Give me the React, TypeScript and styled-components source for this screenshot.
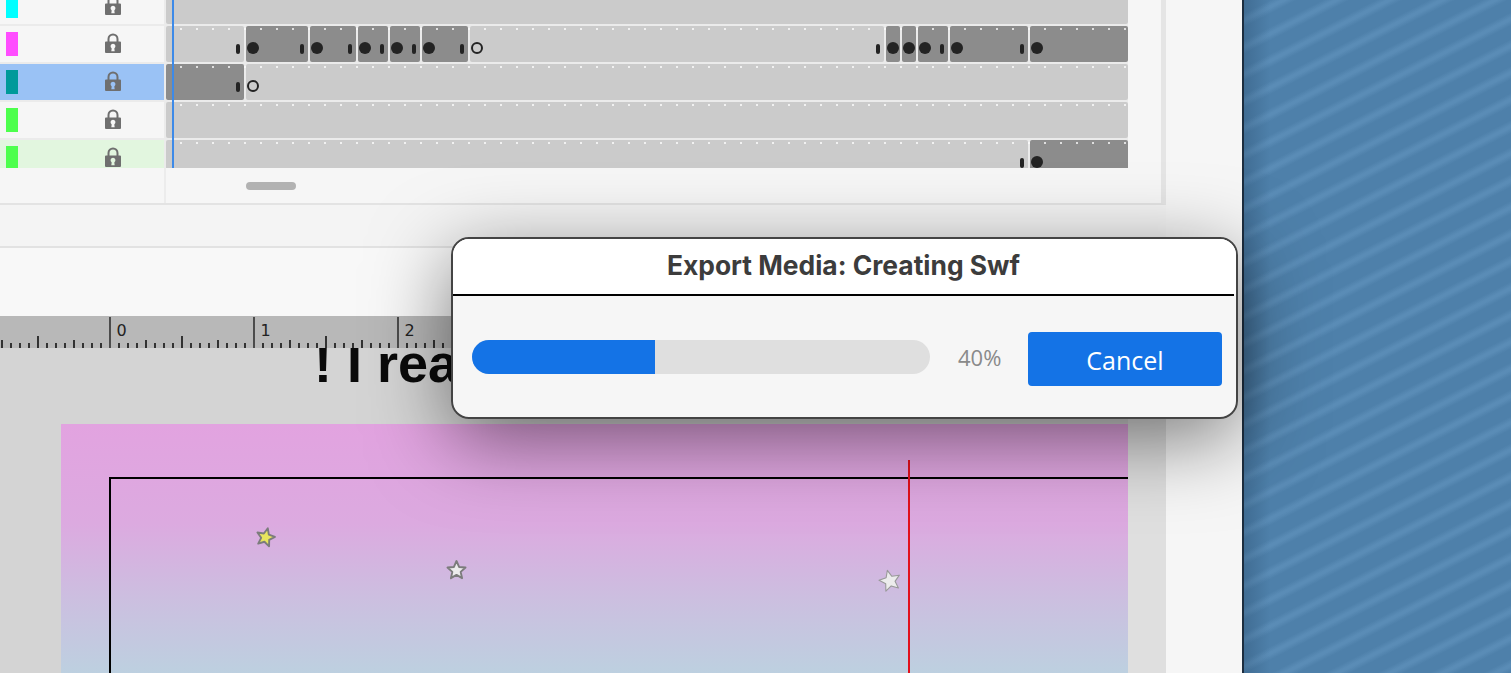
import React from 'react'
import styled, { createGlobalStyle } from 'styled-components'

const GlobalStyle = createGlobalStyle`
  html, body {
    margin: 0;
    padding: 0;
    background: #f6f6f6;
    overflow: hidden;
  }
  * {
    box-sizing: border-box;
  }
`

const Screen = styled.div`
  position: relative;
  display: flex;
  width: 1511px;
  height: 673px;
  overflow: hidden;
  font-family: "Open Sans", "Liberation Sans", sans-serif;
`

const AppWindow = styled.div`
  display: flex;
  flex: 0 0 1244px;
  background: #f6f6f6;
  border-right: 2px solid #1d2e40;
`

const MainColumn = styled.div`
  display: flex;
  flex-direction: column;
  flex: 0 0 1166px;
`

const Desktop = styled.div`
  flex: 1;
  background:
    linear-gradient(90deg, rgba(30, 60, 90, 0.28) 0, rgba(30, 60, 90, 0) 26px),
    repeating-linear-gradient(
      153deg,
      #4e80aa 0 12px,
      #5a8cb6 17px 19px,
      #4e80aa 24px
    );
`

const TimelinePanel = styled.section`
  position: relative;
  flex: 0 0 205px;
  background: #f6f6f6;
  border-right: 5px solid #e5e5e5;
  border-bottom: 2px solid #e3e3e3;
`

const RowsViewport = styled.div`
  height: 168px;
  width: 1128px;
  overflow: hidden;
  background: #ebebeb;
`

const RowList = styled.div`
  display: flex;
  flex-direction: column;
  gap: 2px;
  margin-top: -12px;
`

const Row = styled.div`
  display: flex;
  gap: 2px;
  height: 36px;
`

const LayerCell = styled.div<{ $tint: string }>`
  display: flex;
  flex: 0 0 164px;
  padding: 6px 0 0 6px;
  background: ${(p) => p.$tint};
`

const ColorChip = styled.div<{ $color: string }>`
  width: 12px;
  height: 24px;
  background: ${(p) => p.$color};
`

const LockIcon = styled.svg`
  width: 16px;
  height: 20px;
  margin: 1px 0 0 87px;
  color: #6f6f6f;
`

const Track = styled.div`
  position: relative;
  display: flex;
  flex: 0 0 962px;
  gap: 2px;

  &::after {
    content: '';
    position: absolute;
    inset: 0;
    background-image: linear-gradient(90deg, rgba(255, 255, 255, 0.72) 2px, transparent 2px);
    background-size: 16px 2px;
    background-position: 14px 2px;
    background-repeat: repeat-x;
    pointer-events: none;
  }
`

const FrameSpan = styled.div<{ $width: number; $filled?: boolean }>`
  display: flex;
  align-items: flex-start;
  justify-content: space-between;
  flex: 0 0 ${(p) => p.$width}px;
  min-width: 0;
  padding: 16px 4px 0 1px;
  background: ${(p) => (p.$filled ? '#8c8c8c' : '#cbcbcb')};
  border-radius: 2px;
`

const Keyframe = styled.span<{ $hollow?: boolean }>`
  flex: 0 0 12px;
  height: 12px;
  border-radius: 50%;
  background: ${(p) => (p.$hollow ? 'transparent' : '#232323')};
  border: ${(p) => (p.$hollow ? '2px solid #232323' : 'none')};
`

const EndBar = styled.span`
  flex: 0 0 4px;
  height: 10px;
  margin: 2px 0 0 auto;
  border-radius: 2px;
  background: #232323;
`

const Playhead = styled.div`
  position: absolute;
  left: 172px;
  top: 0;
  width: 2px;
  height: 168px;
  background: #3d8ae8;
`

const ScrollRow = styled.div`
  display: flex;
  width: 1128px;
  height: 35px;
`

const ScrollLabelCell = styled.div`
  flex: 0 0 166px;
  border-right: 2px solid #ececec;
`

const ScrollThumb = styled.div`
  width: 50px;
  height: 8px;
  margin: 14px 0 0 80px;
  border-radius: 4px;
  background: #b2b2b2;
`

const StageToolbar = styled.div`
  flex: 0 0 43px;
  background: #f4f4f4;
  border-bottom: 2px solid #e2e2e2;
`

const StageHeader = styled.div`
  flex: 0 0 68px;
  background: #f8f8f8;
`

const RulerStrip = styled.div`
  position: relative;
  z-index: 1;
  flex: 0 0 32px;
  background: #b8b8b8;
`

const RulerSvg = styled.svg`
  display: block;
  width: 1166px;
  height: 32px;
`

const RulerLabel = styled.text`
  font-family: "DejaVu Sans", sans-serif;
  font-size: 16px;
  fill: #222;
`

const StageCanvas = styled.div`
  position: relative;
  display: flex;
  flex: 1;
  background: #d4d4d4;
  overflow: hidden;
`

const Pasteboard = styled.div`
  flex: 0 0 1128px;
  padding: 76px 0 0 61px;
`

const StageGutter = styled.div`
  flex: 0 0 38px;
  background: #dfdfdf;
`

const Artboard = styled.div`
  position: relative;
  width: 1067px;
  height: 249px;
  padding: 53px 0 0 48px;
  background: linear-gradient(180deg, #e2a3e0 0%, #dcaae0 40%, #cbc0e0 72%, #bdd0e0 100%);
`

const BoundsFrame = styled.div`
  height: 100%;
  border-top: 2px solid #000;
  border-left: 2px solid #000;
`

const GuideLine = styled.div`
  position: absolute;
  left: 847px;
  top: 36px;
  bottom: 0;
  width: 2px;
  background: #e2101c;
`

const StarShape = styled.svg<{ $x: number; $y: number; $size: number; $rotate: number }>`
  position: absolute;
  left: ${(p) => p.$x - p.$size / 2}px;
  top: ${(p) => p.$y - p.$size / 2}px;
  width: ${(p) => p.$size}px;
  height: ${(p) => p.$size}px;
  transform: rotate(${(p) => p.$rotate}deg);
  overflow: visible;
`

const CanvasText = styled.div`
  position: absolute;
  left: 314px;
  top: -12px;
  font-family: "Liberation Sans", Arial, sans-serif;
  font-size: 54px;
  font-weight: 700;
  line-height: 54px;
  color: #0a0a0a;
  white-space: pre;
`

const Dialog = styled.div`
  position: absolute;
  z-index: 2;
  left: 451px;
  top: 237px;
  width: 787px;
  height: 182px;
  display: flex;
  flex-direction: column;
  border: 2px solid #444;
  border-radius: 18px;
  background: #f6f6f6;
  overflow: hidden;
`

const DialogShadow = styled.div`
  position: absolute;
  z-index: 2;
  left: 451px;
  top: 237px;
  width: 787px;
  height: 182px;
  border-radius: 18px;
  box-shadow: 0 20px 80px rgba(0, 0, 0, 0.5);
`

const DialogHeader = styled.header`
  display: flex;
  align-items: center;
  justify-content: center;
  flex: 0 0 55px;
  padding: 0 2px 3px 0;
  background: #fff;
  font-family: Inter, "Liberation Sans", sans-serif;
  font-size: 26.4px;
  font-weight: 700;
  color: #3c3c3c;
`

const DialogRule = styled.div`
  flex: 0 0 2px;
  margin-right: 2px;
  background: #000;
`

const DialogBody = styled.div`
  display: flex;
  align-items: flex-start;
  padding: 36px 14px 0 19px;
`

const ProgressTrack = styled.div`
  flex: 0 0 458px;
  height: 34px;
  margin-top: 8px;
  border-radius: 17px;
  background: #dfdfdf;
  overflow: hidden;
`

const ProgressFill = styled.div`
  height: 100%;
  background: #1473e6;
`

const Percent = styled.span`
  flex: 0 0 98px;
  padding: 9px 0 0 28px;
  font-size: 22px;
  line-height: 32px;
  color: #8a8a8a;
`

const CancelButton = styled.button`
  flex: 0 0 194px;
  height: 54px;
  padding: 2px 0 0;
  border: none;
  border-radius: 4px;
  background: #1473e6;
  color: #fff;
  font-family: "Open Sans", "Liberation Sans", sans-serif;
  font-size: 25px;
`

type Span = { w: number; filled?: boolean; key?: 'dot' | 'hollow'; end?: boolean }

const rows: { chip: string; tint: string; spans: Span[] }[] = [
  { chip: '#00ffff', tint: '#f6f6f6', spans: [{ w: 962 }] },
  {
    chip: '#ff4dff',
    tint: '#f6f6f6',
    spans: [
      { w: 78, end: true },
      { w: 62, filled: true, key: 'dot', end: true },
      { w: 46, filled: true, key: 'dot', end: true },
      { w: 30, filled: true, key: 'dot', end: true },
      { w: 30, filled: true, key: 'dot', end: true },
      { w: 46, filled: true, key: 'dot', end: true },
      { w: 414, key: 'hollow', end: true },
      { w: 14, filled: true, key: 'dot' },
      { w: 14, filled: true, key: 'dot' },
      { w: 30, filled: true, key: 'dot', end: true },
      { w: 78, filled: true, key: 'dot', end: true },
      { w: 98, filled: true, key: 'dot' },
    ],
  },
  {
    chip: '#009a9a',
    tint: '#9ac2f5',
    spans: [
      { w: 78, filled: true, end: true },
      { w: 882, key: 'hollow' },
    ],
  },
  { chip: '#4dff4d', tint: '#f6f6f6', spans: [{ w: 962 }] },
  {
    chip: '#4dff4d',
    tint: '#e2f6df',
    spans: [
      { w: 862, end: true },
      { w: 98, filled: true, key: 'dot' },
    ],
  },
]

const Lock = () => (
  <LockIcon viewBox="0 0 16 20">
    <path d="M3.5 9V6a4.5 4.5 0 0 1 9 0v3" fill="none" stroke="currentColor" strokeWidth="2" />
    <path
      fillRule="evenodd"
      fill="currentColor"
      d="M1 8.5h14a1 1 0 0 1 1 1V19a1 1 0 0 1-1 1H1a1 1 0 0 1-1-1V9.5a1 1 0 0 1 1-1zM8 10.8a2.5 2.5 0 0 0-1.3 4.6L6.3 18.2h3.4l-.4-2.8A2.5 2.5 0 0 0 8 10.8z"
    />
  </LockIcon>
)

const Ruler = () => {
  const ticks = []
  for (let i = -12; i < 118; i++) {
    const x = 110 + i * 9
    let h = 5
    if (i % 16 === 0) h = 31
    else if (i % 8 === 0) h = 12
    else if (i % 4 === 0) h = 8
    ticks.push(<line key={i} x1={x} x2={x} y1={32 - h} y2={32} stroke="#111" strokeWidth={i % 16 === 0 ? 1.3 : 1.6} />)
  }
  return (
    <RulerSvg viewBox="0 0 1166 32">
      {ticks}
      <RulerLabel x="116.5" y="20">0</RulerLabel>
      <RulerLabel x="260.5" y="20">1</RulerLabel>
      <RulerLabel x="404.5" y="20">2</RulerLabel>
    </RulerSvg>
  )
}

const starPoints = (() => {
  const pts = []
  for (let i = 0; i < 10; i++) {
    const r = i % 2 === 0 ? 10 : 4.6
    const a = (Math.PI / 5) * i - Math.PI / 2
    pts.push(`${(10 + r * Math.cos(a)).toFixed(2)},${(10 + r * Math.sin(a)).toFixed(2)}`)
  }
  return pts.join(' ')
})()

const Star = (p: { x: number; y: number; size: number; rotate: number; fill: string; stroke: string; line: number }) => (
  <StarShape viewBox="0 0 20 20" $x={p.x} $y={p.y} $size={p.size} $rotate={p.rotate}>
    <polygon points={starPoints} fill={p.fill} stroke={p.stroke} strokeWidth={p.line} strokeLinejoin="round" />
  </StarShape>
)

const App: React.FC = () => {
  return (
    <Screen>
      <GlobalStyle />
      <AppWindow>
        <MainColumn>
          <TimelinePanel>
            <RowsViewport>
              <RowList>
                {rows.map((row, i) => (
                  <Row key={i}>
                    <LayerCell $tint={row.tint}>
                      <ColorChip $color={row.chip} />
                      <Lock />
                    </LayerCell>
                    <Track>
                      {row.spans.map((s, j) => (
                        <FrameSpan key={j} $width={s.w} $filled={s.filled}>
                          {s.key && <Keyframe $hollow={s.key === 'hollow'} />}
                          {s.end && <EndBar />}
                        </FrameSpan>
                      ))}
                    </Track>
                  </Row>
                ))}
              </RowList>
            </RowsViewport>
            <ScrollRow>
              <ScrollLabelCell />
              <ScrollThumb />
            </ScrollRow>
            <Playhead />
          </TimelinePanel>
          <StageToolbar />
          <StageHeader />
          <RulerStrip>
            <Ruler />
          </RulerStrip>
          <StageCanvas>
            <Pasteboard>
              <Artboard>
                <BoundsFrame />
                <GuideLine />
                <Star x={204} y={113.5} size={19} rotate={14} fill="#e8e45e" stroke="#7c7c7c" line={2} />
                <Star x={395.5} y={146} size={19} rotate={0} fill="#ececec" stroke="#7c7c7c" line={2} />
                <Star x={829} y={157} size={22} rotate={-14} fill="#ececec" stroke="#999" line={1} />
              </Artboard>
            </Pasteboard>
            <StageGutter />
            <CanvasText>! I rea</CanvasText>
          </StageCanvas>
        </MainColumn>
      </AppWindow>
      <Desktop />
      <DialogShadow />
      <Dialog>
        <DialogHeader>Export Media: Creating Swf</DialogHeader>
        <DialogRule />
        <DialogBody>
          <ProgressTrack>
            <ProgressFill style={{ width: '40%' }} />
          </ProgressTrack>
          <Percent>40%</Percent>
          <CancelButton>Cancel</CancelButton>
        </DialogBody>
      </Dialog>
    </Screen>
  )
}

export default App
